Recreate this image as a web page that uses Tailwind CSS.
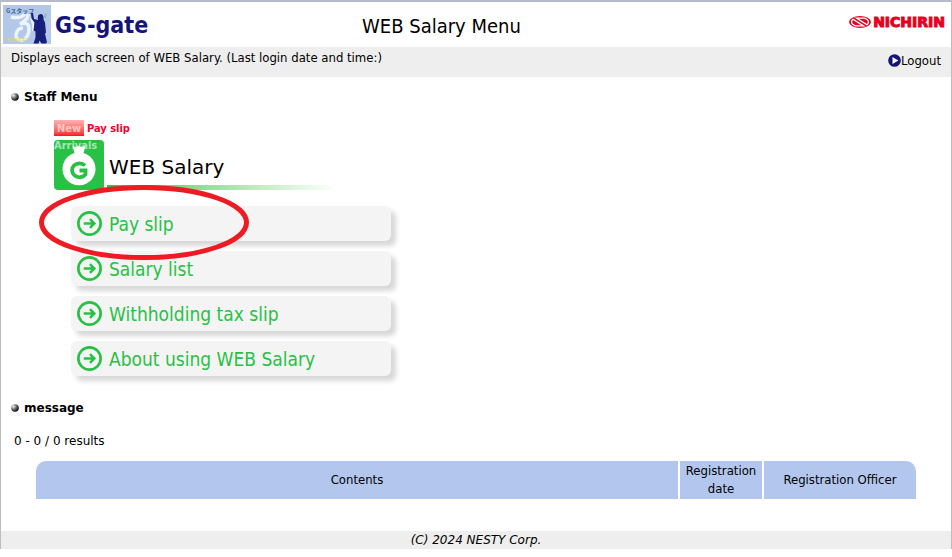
<!DOCTYPE html>
<html lang="en">
<head>
<meta charset="utf-8">
<title>WEB Salary Menu</title>
<script src="https://cdn.jsdelivr.net/npm/@tailwindcss/browser@4"></script>
</head>
<body class="bg-white text-black font-['DejaVu_Sans_Condensed','DejaVu_Sans',sans-serif] text-[13px] leading-[18px]">
<div class="border-x border-x-[#bdbdbd] border-t-2 border-t-[#b7bacb]">
  <header class="grid grid-cols-[3fr_4fr_2fr] items-center h-[45px] pl-[2px] pr-[6px]">
    <div class="flex items-center gap-1">
      <svg class="w-12 h-[39px]" viewBox="0 0 48 39" role="img" aria-label="GS staff">
        <rect width="48" height="39" fill="#b3c8e8"/>
        <path d="M8 12Q18 14 22 9M25 9Q26 14 17 19Q26 16 26 24Q26 32 20 35Q13 36 13 30Q14 23 20 23" fill="none" stroke="#edf3fb" stroke-width="3.500"/>
        <path d="M28 13Q31 20 30 26" fill="none" stroke="#edf3fb" stroke-width="2"/>
        <path d="M28 8l2 0 1 6 4 1q-1-6 2.500-6 3.500 0 3 5.500l1.500 3 1 10-1 1 2 9-1.500 1h-4l-2-3-1 3h-5l2-6 0-6-2-1 1-8-3-4z" fill="#16207a"/>
        <path d="M41 10l2-2 1 2-1 3h-2z" fill="#93c4a0"/>
        <text x="3" y="8" font-size="6" font-weight="bold" fill="#3f6699" font-family="Noto Sans CJK JP, sans-serif">Gスタッフ</text>
        <text x="4" y="37" font-size="6" font-weight="bold" fill="#ddd57a" font-family="Liberation Sans, sans-serif">STAFF</text>
      </svg>
      <span class="text-[23px] leading-[30px] font-bold text-[#14147a]">GS-gate</span>
    </div>
    <h1 class="text-[20px] leading-[28px] pt-[2px] pl-[45px]">WEB Salary Menu</h1>
    <div class="flex justify-end items-center gap-[2px] pb-[6px]">
      <svg class="w-[22px] h-[12px]" viewBox="0 0 22 12" aria-hidden="true">
        <ellipse cx="11" cy="6" rx="11" ry="6" fill="#e60020"/>
        <path d="M14.500 9.900H6.500Q2.500 8.500 2.500 5.800Q2.700 4.300 4 3.300Z" fill="none" stroke="#fff" stroke-width="1.300"/>
        <path d="M7.500 2.100H15.500Q19.500 3.500 19.500 6.200Q19.300 7.700 18 8.700Z" fill="none" stroke="#fff" stroke-width="1.300"/>
      </svg>
      <span class="text-[14px] leading-4 font-bold text-[#e60020] font-['DejaVu_Sans',sans-serif] [-webkit-text-stroke:1px_#e60020]">NICHIRIN</span>
    </div>
  </header>

  <div class="flex justify-between bg-[#eeeeee] h-[30px] pl-[10px] pr-[10px]">
    <p class="pt-[2px]">Displays each screen of WEB Salary. (Last login date and time:)</p>
    <a href="#" class="flex items-center pt-[5px] h-[22px]">
      <svg class="w-[13px] h-[13px]" viewBox="0 0 13 13" aria-hidden="true"><circle cx="6.500" cy="6.500" r="6.300" fill="#14147a"/><path d="M4.500 3L10.300 6.500L4.500 10z" fill="#fff"/></svg>Logout</a>
  </div>

  <main>
    <h2 class="flex items-center gap-[5px] pl-[10px] pt-[11px] text-[12px] font-bold font-['DejaVu_Sans',sans-serif]">
      <svg class="w-2 h-2" viewBox="0 0 8 8" aria-hidden="true"><defs><radialGradient id="ball" cx=".3" cy=".3" r=".7"><stop offset="0" stop-color="#eee"/><stop offset=".5" stop-color="#777"/><stop offset="1" stop-color="#111"/></radialGradient></defs><circle cx="4" cy="4" r="3.800" fill="url(#ball)"/></svg>Staff Menu</h2>

    <section class="relative ml-[53px] mt-[14px]">
      <div class="flex gap-[3px] h-4 text-[11px] leading-[17px] font-bold">
        <span class="relative z-10 w-[30px] h-4 text-center text-white/60 bg-linear-to-b from-[#ffb0b4] to-[#ff0022]">New<br>Arrivals</span>
        <a href="#" class="text-[#f5002d]">Pay slip</a>
      </div>
      <div class="flex mt-1 gap-[3px]">
        <svg class="w-[50px] h-[50px]" viewBox="0 0 50 50" aria-hidden="true">
          <rect width="50" height="50" rx="4" fill="#28c146"/>
          <path d="M18.500 6q3 1.500 6 0 3 1.500 7 0l-2 7a16.500 16.500 0 1 1-9 0z" fill="#fff"/>
          <path d="M31 25.500A7.500 7 0 1 0 31.500 34.500V30.500H25.500" fill="none" stroke="#28c146" stroke-width="3.800"/>
        </svg>
        <div class="flex flex-col justify-between">
          <h3 class="pt-[13px] pl-[2px] text-[20px] leading-[28px] font-['DejaVu_Sans',sans-serif]">WEB Salary</h3>
          <div class="w-[230px] h-[5px] bg-linear-to-r from-[#28c146] to-white"></div>
        </div>
      </div>
      <nav class="flex flex-col gap-[10px] mt-4 ml-[17px] w-80 text-[19px] leading-[28px] text-[#28c146]">
        <a href="#" class="flex items-center gap-[7px] h-[35px] pl-[6px] rounded-[6px] bg-[#f4f4f4] shadow-[5px_5px_5px_#d8d8d8]">
          <svg class="w-[25px] h-[25px]" viewBox="0 0 26 26" fill="none" stroke="#28c146" aria-hidden="true"><circle cx="13" cy="13" r="11.600" stroke-width="2.800"/><path d="M7 13H18M13.500 8.500L18 13L13.500 17.500" stroke-width="2.600"/></svg>Pay slip</a>
        <a href="#" class="flex items-center gap-[7px] h-[35px] pl-[6px] rounded-[6px] bg-[#f4f4f4] shadow-[5px_5px_5px_#d8d8d8]">
          <svg class="w-[25px] h-[25px]" viewBox="0 0 26 26" fill="none" stroke="#28c146" aria-hidden="true"><circle cx="13" cy="13" r="11.600" stroke-width="2.800"/><path d="M7 13H18M13.500 8.500L18 13L13.500 17.500" stroke-width="2.600"/></svg>Salary list</a>
        <a href="#" class="flex items-center gap-[7px] h-[35px] pl-[6px] rounded-[6px] bg-[#f4f4f4] shadow-[5px_5px_5px_#d8d8d8]">
          <svg class="w-[25px] h-[25px]" viewBox="0 0 26 26" fill="none" stroke="#28c146" aria-hidden="true"><circle cx="13" cy="13" r="11.600" stroke-width="2.800"/><path d="M7 13H18M13.500 8.500L18 13L13.500 17.500" stroke-width="2.600"/></svg>Withholding tax slip</a>
        <a href="#" class="flex items-center gap-[7px] h-[35px] pl-[6px] rounded-[6px] bg-[#f4f4f4] shadow-[5px_5px_5px_#d8d8d8]">
          <svg class="w-[25px] h-[25px]" viewBox="0 0 26 26" fill="none" stroke="#28c146" aria-hidden="true"><circle cx="13" cy="13" r="11.600" stroke-width="2.800"/><path d="M7 13H18M13.500 8.500L18 13L13.500 17.500" stroke-width="2.600"/></svg>About using WEB Salary</a>
      </nav>
      <svg class="absolute -left-[15px] top-[65px] w-[210px] h-[75px] pointer-events-none" viewBox="0 0 210 75" fill="none" aria-hidden="true"><ellipse cx="105" cy="37.500" rx="102.500" ry="35" stroke="#ed1c24" stroke-width="5"/></svg>
    </section>

    <h2 class="flex items-center gap-[5px] pl-[10px] mt-[23px] text-[12px] font-bold font-['DejaVu_Sans',sans-serif]">
      <svg class="w-2 h-2" viewBox="0 0 8 8" aria-hidden="true"><circle cx="4" cy="4" r="3.800" fill="url(#ball)"/></svg>message</h2>
    <p class="pl-[13px] mt-[15px] text-[12px] font-['DejaVu_Sans',sans-serif]">0 - 0 / 0 results</p>
    <div class="pl-[35px] pr-[35px] mt-[11px]">
      <table class="w-full table-fixed border-separate border-spacing-0">
        <colgroup><col><col class="w-[84px]"><col class="w-[154px]"></colgroup>
        <thead><tr>
          <th class="h-[38px] p-0 font-normal bg-[#b3c7ee] rounded-tl-[10px]">Contents</th>
          <th class="p-0 font-normal bg-[#b3c7ee] border-l-2 border-white">Registration date</th>
          <th class="p-0 font-normal bg-[#b3c7ee] border-l-2 border-white rounded-tr-[10px]">Registration Officer</th>
        </tr></thead>
      </table>
    </div>
  </main>
  <footer class="mt-8 h-[18px] bg-[#eeeeee] text-center italic text-[12px] font-['DejaVu_Sans',sans-serif]">(C) 2024 NESTY Corp.</footer>
</div>
</body>
</html>
